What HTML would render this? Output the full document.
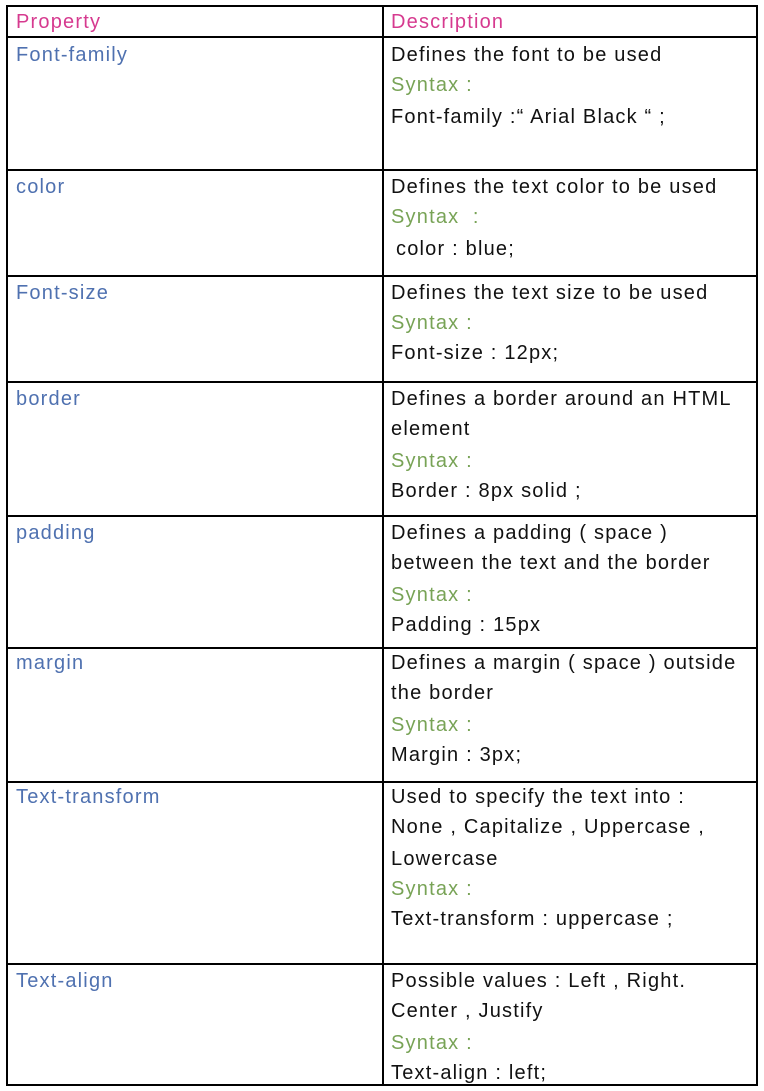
<!DOCTYPE html>
<html><head><meta charset="utf-8"><style>
body{margin:0;width:764px;height:1091px;background:#fff;position:relative;overflow:hidden;font-family:"Liberation Sans",sans-serif;font-size:20px;letter-spacing:1.2px;}
.h{position:absolute;height:2px;background:#000;left:6px;width:752px}
.v{position:absolute;width:2px;background:#000;top:6px;height:1080px}
.t{position:absolute;line-height:26px;white-space:nowrap;color:#111;margin-top:1px}
.p{color:#d63a8f}.b{color:#4f71b0}.g{color:#78a356}
</style></head><body>
<div class="h" style="top:5px"></div>
<div class="h" style="top:36px"></div>
<div class="h" style="top:169px"></div>
<div class="h" style="top:275px"></div>
<div class="h" style="top:381px"></div>
<div class="h" style="top:515px"></div>
<div class="h" style="top:647px"></div>
<div class="h" style="top:781px"></div>
<div class="h" style="top:963px"></div>
<div class="h" style="top:1084px"></div>
<div class="v" style="left:6px;top:5px"></div>
<div class="v" style="left:382px;top:5px"></div>
<div class="v" style="left:756px;top:5px"></div>

<div class="t p" style="left:16px;top:8px">Property</div>
<div class="t p" style="left:391px;top:8px">Description</div>

<div class="t b" style="left:16px;top:41px">Font-family</div>
<div class="t" style="left:391px;top:41px">Defines the font to be used</div>
<div class="t g" style="left:391px;top:71px">Syntax :</div>
<div class="t" style="left:391px;top:103px">Font-family :“ Arial Black “ ;</div>

<div class="t b" style="left:16px;top:173px">color</div>
<div class="t" style="left:391px;top:173px">Defines the text color to be used</div>
<div class="t g" style="left:391px;top:203px">Syntax &nbsp;:</div>
<div class="t" style="left:396px;top:235px">color : blue;</div>

<div class="t b" style="left:16px;top:279px">Font-size</div>
<div class="t" style="left:391px;top:279px">Defines the text size to be used</div>
<div class="t g" style="left:391px;top:309px">Syntax :</div>
<div class="t" style="left:391px;top:339px">Font-size : 12px;</div>

<div class="t b" style="left:16px;top:385px">border</div>
<div class="t" style="left:391px;top:385px">Defines a border around an HTML</div>
<div class="t" style="left:391px;top:415px">element</div>
<div class="t g" style="left:391px;top:447px">Syntax :</div>
<div class="t" style="left:391px;top:477px">Border : 8px solid ;</div>

<div class="t b" style="left:16px;top:519px">padding</div>
<div class="t" style="left:391px;top:519px">Defines a padding ( space )</div>
<div class="t" style="left:391px;top:549px">between the text and the border</div>
<div class="t g" style="left:391px;top:581px">Syntax :</div>
<div class="t" style="left:391px;top:611px">Padding : 15px</div>

<div class="t b" style="left:16px;top:649px">margin</div>
<div class="t" style="left:391px;top:649px">Defines a margin ( space ) outside</div>
<div class="t" style="left:391px;top:679px">the border</div>
<div class="t g" style="left:391px;top:711px">Syntax :</div>
<div class="t" style="left:391px;top:741px">Margin : 3px;</div>

<div class="t b" style="left:16px;top:783px">Text-transform</div>
<div class="t" style="left:391px;top:783px">Used to specify the text into :</div>
<div class="t" style="left:391px;top:813px">None , Capitalize , Uppercase ,</div>
<div class="t" style="left:391px;top:845px">Lowercase</div>
<div class="t g" style="left:391px;top:875px">Syntax :</div>
<div class="t" style="left:391px;top:905px">Text-transform : uppercase ;</div>

<div class="t b" style="left:16px;top:967px">Text-align</div>
<div class="t" style="left:391px;top:967px">Possible values : Left , Right.</div>
<div class="t" style="left:391px;top:997px">Center , Justify</div>
<div class="t g" style="left:391px;top:1029px">Syntax :</div>
<div class="t" style="left:391px;top:1059px">Text-align : left;</div>
</body></html>
